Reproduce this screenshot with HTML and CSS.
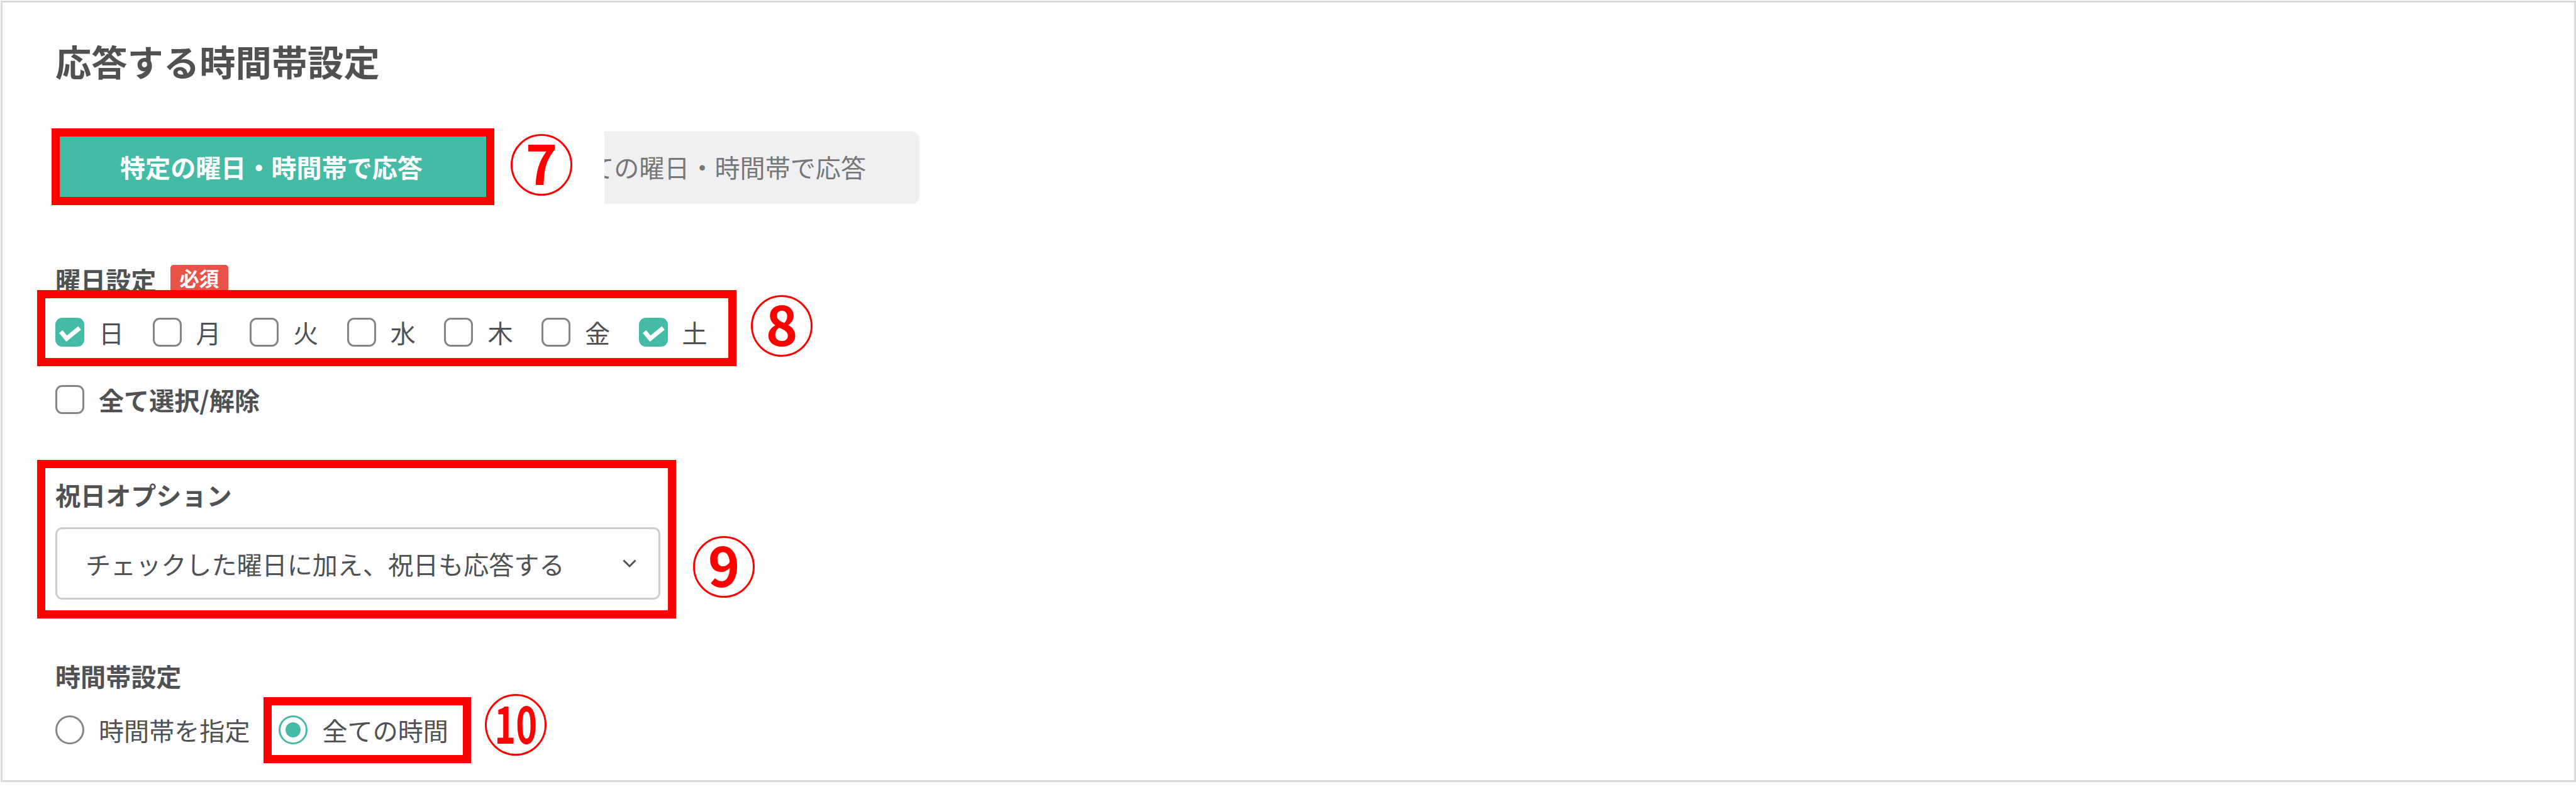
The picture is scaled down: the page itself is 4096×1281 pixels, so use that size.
FILE: index.html
```html
<!DOCTYPE html>
<html lang="ja">
<head>
    <meta charset="UTF-8">
    <title>応答する時間帯設定</title>
    <link rel="stylesheet" href="styles.css">
</head>
<body>
<div class="card">
    <h1>応答する時間帯設定</h1>

    <div class="tabs">
        <div class="tab active">特定の曜日・時間帯で応答</div>
        <div class="tab inactive">ての曜日・時間帯で応答</div>
    </div>

    <div class="heading-row">
        <h2>曜日設定</h2>
        <span class="required">必須</span>
    </div>
    <div class="days">
        <label class="option"><span class="box checked"><svg viewBox="0 0 49 49"><path d="M9.3 23.5 L19 35.3 L41.2 17.3"/></svg></span>日</label>
        <label class="option"><span class="box"></span>月</label>
        <label class="option"><span class="box"></span>火</label>
        <label class="option"><span class="box"></span>水</label>
        <label class="option"><span class="box"></span>木</label>
        <label class="option"><span class="box"></span>金</label>
        <label class="option"><span class="box checked"><svg viewBox="0 0 49 49"><path d="M9.3 23.5 L19 35.3 L41.2 17.3"/></svg></span>土</label>
    </div>
    <label class="option select-all"><span class="box"></span>全て選択/解除</label>

    <h2 class="holiday-title">祝日オプション</h2>
    <div class="select">
        <span>チェックした曜日に加え、祝日も応答する</span>
        <svg class="chevron" viewBox="0 0 22 14"><path d="M1.5 1.5 L11 11 L20.5 1.5"/></svg>
    </div>

    <h2 class="time-title">時間帯設定</h2>
    <div class="times">
        <label class="option"><span class="radio"></span>時間帯を指定</label>
        <label class="option"><span class="radio on"></span>全ての時間</label>
    </div>
</div>

<!-- manual annotations over the form -->
<div class="mark mark7"></div>
<div class="num num7"><span>7</span></div>
<div class="mark mark8"></div>
<div class="num num8"><span>8</span></div>
<div class="mark mark9"></div>
<div class="num num9"><span>9</span></div>
<div class="mark mark10"></div>
<div class="num num10"><span>10</span></div>
</body>
</html>
```
FILE: styles.css
```css
* {
    box-sizing: border-box;
}

body {
    margin: 0;
    padding: 1px 0 0 1px;
    height: 1281px;
    overflow: hidden;
    position: relative;
    background-color: #fefefe;
    color: #505153;
    font-family: "Noto Sans CJK JP", sans-serif;
    font-size: 40.1px;
    line-height: 44px;
}

.card {
    height: 1242px;
    border: 3px solid #d9d9d9;
    padding: 63px 0 0 84px;
}

h1 {
    margin: 0;
    font-size: 57.3px;
    line-height: 60px;
}

h2 {
    margin: 0;
    font-size: 40.1px;
    line-height: 44px;
}

.tabs {
    display: flex;
    gap: 183px;
    margin-top: 82px;
}

.tab {
    height: 115px;
    line-height: 111px;
    white-space: nowrap;
}

.active {
    width: 690px;
    padding-left: 103px;
    background-color: #44bba4;
    color: #fff;
    font-weight: bold;
}

.inactive {
    display: flex;
    justify-content: flex-end;
    width: 501px;
    padding-right: 85px;
    overflow: clip;
    border-radius: 0 12px 12px 0;
    background-color: #f0f0f3;
    color: #777;
}

.heading-row {
    display: flex;
    align-items: center;
    gap: 22.5px;
    height: 46px;
    margin-top: 97px;
}

.required {
    width: 92px;
    height: 46px;
    border-radius: 5px;
    background-color: #e85248;
    color: #fff;
    font-size: 31.5px;
    font-weight: bold;
    line-height: 40px;
    text-align: center;
}

.days {
    display: flex;
    gap: 45.5px;
    margin-top: 38px;
}

.option {
    display: flex;
    align-items: center;
    gap: 23px;
    height: 46px;
    line-height: 42px;
}

.box, .radio {
    width: 46px;
    height: 46px;
    border: 3px solid #858585;
    border-radius: 11px;
}

.checked {
    border: none;
    background-color: #44bba4;
}

.checked svg {
    display: block;
    width: 46px;
    height: 46px;
    fill: none;
    stroke: #fff;
    stroke-width: 7.5;
}

.select-all {
    margin-top: 61px;
    font-weight: bold;
}

.holiday-title {
    margin-top: 106px;
}

.select {
    display: flex;
    align-items: center;
    justify-content: space-between;
    width: 962px;
    height: 115px;
    margin-top: 30px;
    padding: 0 35px 0 45px;
    border: 3px solid #ccc;
    border-radius: 11px;
}

.chevron {
    width: 22px;
    height: 14px;
    fill: none;
    stroke: #555;
    stroke-width: 3;
}

.time-title {
    margin-top: 99px;
}

.times {
    display: flex;
    gap: 46px;
    margin-top: 41px;
}

.radio {
    border-radius: 50%;
}

.on {
    display: flex;
    align-items: center;
    justify-content: center;
    border-color: #44bba4;
}

.on::after {
    content: "";
    width: 24px;
    height: 24px;
    border-radius: 50%;
    background-color: #44bba4;
}

.mark {
    position: absolute;
    border: 13px solid #f00;
}

.mark7 {
    left: 82px;
    top: 204px;
    width: 704px;
    height: 122px;
}

.mark8 {
    left: 59px;
    top: 461px;
    width: 1112px;
    height: 121px;
}

.mark9 {
    left: 59px;
    top: 731px;
    width: 1016px;
    height: 252px;
}

.mark10 {
    left: 419px;
    top: 1108px;
    width: 330px;
    height: 105px;
}

.num {
    display: flex;
    align-items: center;
    justify-content: center;
    position: absolute;
    width: 98px;
    height: 98px;
    padding-bottom: 10px;
    border: 3px solid #f00;
    border-radius: 50%;
    color: #f00;
    font-size: 86px;
    font-weight: bold;
    line-height: 80px;
}

.num7 {
    left: 812px;
    top: 213px;
}

.num8 {
    left: 1194px;
    top: 469px;
}

.num9 {
    left: 1102px;
    top: 852px;
}

.num10 {
    left: 771px;
    top: 1103px;
    font-size: 80px;
}

.num10 span {
    transform: scaleX(0.72);
}
```
